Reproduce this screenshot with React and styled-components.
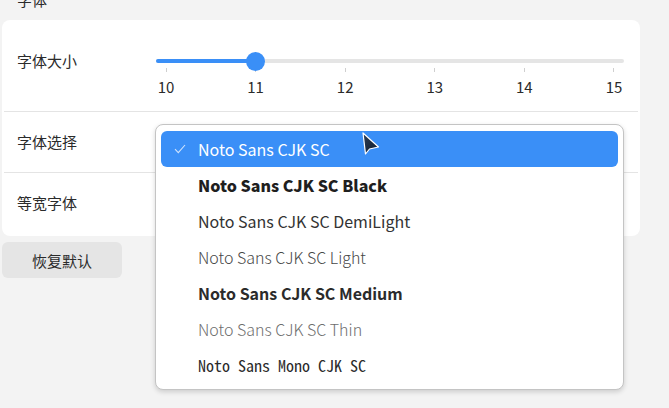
import React from 'react'
import styled, { createGlobalStyle } from 'styled-components'

const GlobalStyle = createGlobalStyle`
  html, body {
    margin: 0;
    padding: 0;
    background: #f3f3f3;
    font-family: "Noto Sans CJK SC", "Noto Sans", sans-serif;
    color: #2b2b2b;
    overflow: hidden;
  }
`

const fonts = [
  { name: 'Noto Sans CJK SC', weight: 400, color: '#2b2b2b' },
  { name: 'Noto Sans CJK SC Black', weight: 900, color: '#1f1f1f' },
  { name: 'Noto Sans CJK SC DemiLight', weight: 400, color: '#333333' },
  { name: 'Noto Sans CJK SC Light', weight: 300, color: '#474747' },
  { name: 'Noto Sans CJK SC Medium', weight: 600, color: '#2b2b2b' },
  { name: 'Noto Sans CJK SC Thin', weight: 200, color: '#6e6e6e' },
  { name: 'Noto Sans Mono CJK SC', weight: 500, color: '#2b2b2b', mono: true },
]

const ticks = [10, 11, 12, 13, 14, 15]

const App = () => {
  const value = 11
  const pct = ((value - ticks[0]) / (ticks[ticks.length - 1] - ticks[0])) * 100

  return (
    <Page>
      <GlobalStyle />
      <SectionTitle>字体</SectionTitle>
      <Card>
        <Row tall>
          <Label $top="31px">字体大小</Label>
          <Slider>
            <TrackArea>
              <Track>
                <Rail>
                  <Fill style={{ width: `${pct}%` }} />
                  <Thumb style={{ left: `${pct}%` }} />
                </Rail>
              </Track>
            </TrackArea>
            <Ticks>
              {ticks.map((t) => (
                <Tick key={t}>
                  <TickMark />
                  <TickLabel>{t}</TickLabel>
                </Tick>
              ))}
            </Ticks>
          </Slider>
        </Row>
        <Row>
          <Label>字体选择</Label>
        </Row>
        <Row last>
          <Label $top="0">等宽字体</Label>
        </Row>

        <Menu>
          {fonts.map((f, i) => (
            <MenuItem key={f.name} $active={i === 0}>
              <Check>
                {i === 0 && (
                  <svg width="12" height="10" viewBox="0 0 12 10">
                    <path d="M1 5.2 L4.3 8.6 L11 1" fill="none" stroke="#cfe3fd" strokeWidth="1.1" />
                  </svg>
                )}
              </Check>
              <ItemText $weight={f.weight} $color={i === 0 ? '#ffffff' : f.color} $mono={f.mono}>
                {f.name}
              </ItemText>
            </MenuItem>
          ))}
          <Cursor width="20" height="24" viewBox="0 0 20 24">
            <defs>
              <linearGradient id="cur" x1="0" y1="0" x2="1" y2="1">
                <stop offset="0" stopColor="#2d3f58" />
                <stop offset="1" stopColor="#0f1a2a" />
              </linearGradient>
            </defs>
            <path d="M2 1 L4.5 22 L8.5 17 L17.5 15 Z" fill="url(#cur)" stroke="#ffffff" strokeWidth="1.2" strokeLinejoin="round" />
          </Cursor>
        </Menu>
      </Card>
      <ResetButton>恢复默认</ResetButton>
    </Page>
  )
}

const Page = styled.div`
  width: 638px;
  padding: 0 29px 0 2px;
  height: 408px;
`

const SectionTitle = styled.div`
  font-size: 15px;
  line-height: 20px;
  margin-top: -10px;
  padding-left: 15px;
  color: #2b2b2b;
`

const Card = styled.div`
  position: relative;
  margin-top: 10px;
  background: #ffffff;
  border-radius: 8px;
`

const Row = styled.div`
  display: grid;
  grid-template-columns: 139px 1fr;
  align-items: ${(p) => (p.tall ? 'start' : 'center')};
  height: ${(p) => (p.tall ? '91px' : p.last ? '63px' : '60px')};
  margin: 0 2px;
  padding: 0 14px 0 13px;
  border-bottom: ${(p) => (p.last ? 'none' : '1px solid #e4e4e4')};
`

const Label = styled.div`
  font-size: 15px;
  line-height: 20px;
  color: #2b2b2b;
  padding-top: ${(p) => p.$top || '0'};
  margin-top: ${(p) => (p.$top === '0' ? '-3px' : '0')};
`

const Slider = styled.div`
  display: flex;
  flex-direction: column;
  padding-top: 31px;
`

const TrackArea = styled.div`
  height: 20px;
  display: flex;
  align-items: center;
`

const Track = styled.div`
  width: 100%;
  height: 4px;
  border-radius: 2px;
  background: #e5e5e5;
  padding: 0 10px;
  box-sizing: border-box;
  position: relative;
`

const Rail = styled.div`
  position: relative;
  height: 100%;
`

const Fill = styled.div`
  position: absolute;
  left: -10px;
  top: 0;
  height: 100%;
  padding-left: 10px;
  background: #3a8ff7;
  border-radius: 2px;
`

const Thumb = styled.div`
  position: absolute;
  top: 50%;
  width: 19px;
  height: 19px;
  margin: -9.5px 0 0 -9.5px;
  border-radius: 50%;
  background: #3a8ff7;
`

const Ticks = styled.div`
  display: flex;
  justify-content: space-between;
  padding: 0 10px;
  margin-top: -3px;
`

const Tick = styled.div`
  width: 0;
  display: flex;
  flex-direction: column;
  align-items: center;
`

const TickMark = styled.div`
  width: 1px;
  height: 4px;
  background: #cfcfcf;
  flex-shrink: 0;
`

const TickLabel = styled.div`
  font-size: 15px;
  line-height: 20px;
  margin-top: 5px;
  color: #2b2b2b;
  white-space: nowrap;
`

const Menu = styled.div`
  position: absolute;
  left: 153px;
  top: 104px;
  width: 457px;
  padding: 6px 5px;
  background: #ffffff;
  border: 1px solid #c4c4c4;
  border-radius: 8px;
  box-shadow: 0 2px 5px rgba(0, 0, 0, 0.16);
  display: flex;
  flex-direction: column;
`

const MenuItem = styled.div`
  display: flex;
  align-items: center;
  height: 36px;
  border-radius: 6px;
  background: ${(p) => (p.$active ? '#3a8ff7' : 'transparent')};
`

const Check = styled.div`
  width: 36px;
  display: flex;
  justify-content: center;
  padding-left: 1px;
`

const ItemText = styled.span`
  font-family: ${(p) =>
    p.$mono ? '"Noto Sans Mono CJK SC", "DejaVu Sans Mono", monospace' : '"Noto Sans CJK SC", sans-serif'};
  font-size: 16px;
  font-weight: ${(p) => p.$weight};
  color: ${(p) => p.$color};
  white-space: nowrap;
`

const Cursor = styled.svg`
  position: absolute;
  left: 205px;
  top: 7px;
`

const ResetButton = styled.div`
  margin-top: 6px;
  width: 120px;
  height: 36px;
  border-radius: 6px;
  background: #e5e5e5;
  display: flex;
  align-items: center;
  justify-content: center;
  font-size: 15px;
  color: #2b2b2b;
`

export default App
